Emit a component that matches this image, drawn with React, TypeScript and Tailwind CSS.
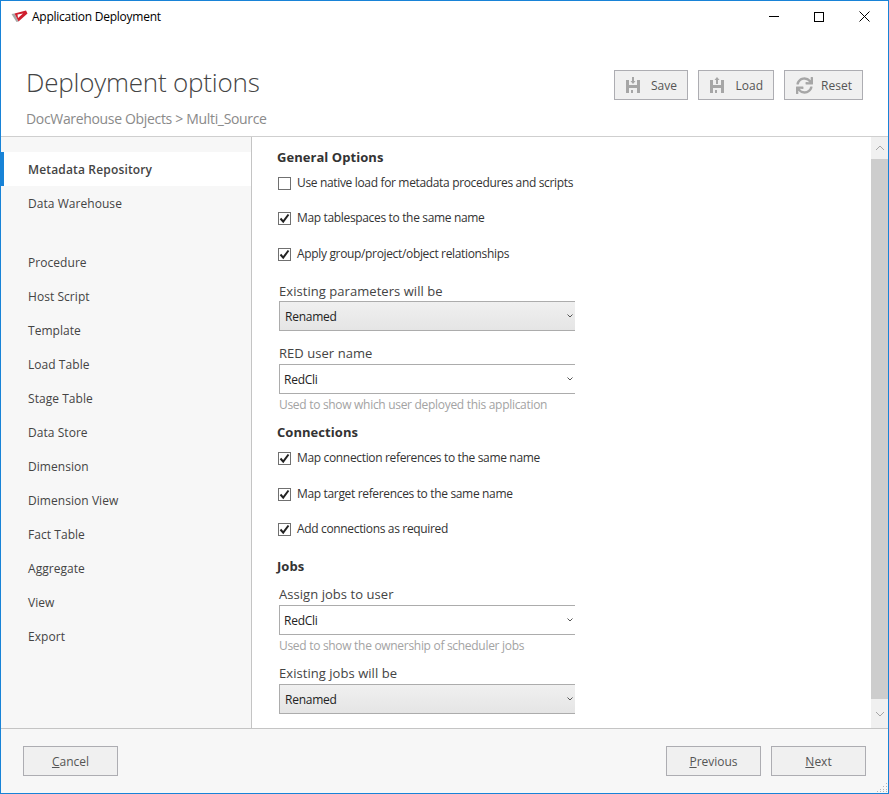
import React from "react";
import { FaSync } from "react-icons/fa";

const objects = [
  "Procedure",
  "Host Script",
  "Template",
  "Load Table",
  "Stage Table",
  "Data Store",
  "Dimension",
  "Dimension View",
  "Fact Table",
  "Aggregate",
  "View",
  "Export",
];

const Logo = () => (
  <svg width="17" height="13" viewBox="0 0 17 13" className="shrink-0">
    <path d="M0.5 4 L3.5 3.5 L7.5 11.5 L5.5 12 Z" fill="#a8a8a8" />
    <path d="M3.5 3.5 L15 0.5 L16.5 3.5 L7.5 11.5 Z M6.5 4.5 L12 3.5 L7 8 Z" fill="#cf1f2e" fillRule="evenodd" />
  </svg>
);

const Disk = ({ up }: { up?: boolean }) => (
  <svg width="14" height="16" viewBox="0 0 14 16" className="shrink-0">
    <path d="M0 3 H3 V8 H11 V3 H14 V16 H0 Z" fill="#a6a6a6" />
    <rect x="3" y="11" width="8" height="5" fill="#f0f0f0" />
    <rect x="5" y="13" width="2" height="3" fill="#a6a6a6" />
    {up ? (
      <path d="M7 0 L9.5 3 H8 V7 H6 V3 H4.5 Z" fill="#a6a6a6" />
    ) : (
      <path d="M6 0 H8 V4 H9.5 L7 7 L4.5 4 H6 Z" fill="#a6a6a6" />
    )}
  </svg>
);

const Chevron = () => (
  <svg width="6" height="4" viewBox="0 0 6 4" className="ml-auto mr-[2px] shrink-0">
    <path d="M0.5 0.5 L3 3 L5.5 0.5" fill="none" stroke="#555555" strokeWidth="1" />
  </svg>
);

const Check = ({ label, checked, className }: { label: string; checked?: boolean; className?: string }) => (
  <div className={`flex items-center gap-[6px] h-[18px] -ml-[1px] ${className ?? ""}`}>
    <span className="w-[13px] h-[13px] border border-[#707070] bg-white flex items-center justify-center shrink-0">
      {checked && (
        <svg width="11" height="11" viewBox="0 0 11 11">
          <path d="M1.5 5.5 L4.2 8.6 L9.5 1.5" fill="none" stroke="#222222" strokeWidth="2" />
        </svg>
      )}
    </span>
    <span className="text-[12px] text-[#333333] tracking-[-0.34px] whitespace-nowrap">{label}</span>
  </div>
);

const Combo = ({ value, editable }: { value: string; editable?: boolean }) => (
  <div
    className={`h-[30px] w-[296px] flex items-center border-y border-l border-[#acacac] text-[12px] text-[#222222] tracking-[-0.25px] ${
      editable ? "bg-white pl-[4px]" : "bg-gradient-to-b from-[#f0f0f0] to-[#e5e5e5] pl-[5px]"
    }`}
  >
    <span className="pt-[2px]">{value}</span>
    <Chevron />
  </div>
);

const FieldLabel = ({ children, className }: { children: React.ReactNode; className?: string }) => (
  <div className={`text-[13px] text-[#444444] tracking-[0.05px] leading-[18px] h-[18px] ${className ?? ""}`}>
    {children}
  </div>
);

const Help = ({ children }: { children: React.ReactNode }) => (
  <div className="text-[12px] text-[#a3a3a3] tracking-[-0.3px] leading-[16px] h-[16px] mt-[3px]">{children}</div>
);

const Heading = ({ children, className }: { children: React.ReactNode; className?: string }) => (
  <div className={`text-[13px] font-bold text-[#333333] tracking-[0.05px] leading-[18px] h-[18px] -ml-[2px] ${className ?? ""}`}>
    {children}
  </div>
);

const ToolButton = ({ icon, label, width }: { icon: React.ReactNode; label: string; width: string }) => (
  <button className={`h-[30px] ${width} flex items-center justify-between pl-[11px] pr-[10px] border border-[#adadb2] bg-[#f0f0f0] text-[12px] text-[#555555]`}>
    {icon}
    <span className="pt-[2px]">{label}</span>
  </button>
);

const FooterButton = ({ mnemonic, rest }: { mnemonic: string; rest: string }) => (
  <button className="h-[30px] w-[95px] pt-[2px] border border-[#adadb2] bg-[#f0f0f0] text-[12px] text-[#555555]">
    <u>{mnemonic}</u>
    {rest}
  </button>
);

const Arrow = ({ down }: { down?: boolean }) => (
  <svg width="10" height="6" viewBox="0 0 10 6">
    <path d={down ? "M1 1 L5 5 L9 1" : "M1 5 L5 1 L9 5"} fill="none" stroke="#a6a6a6" strokeWidth="1" />
  </svg>
);

export default function App() {
  return (
    <div
      className="relative w-[889px] h-[794px] flex flex-col overflow-hidden bg-white border border-[#1883d7]"
      style={{ fontFamily: '"Open Sans", "Noto Sans", sans-serif' }}
    >
      {/* title bar */}
      <div className="h-[31px] shrink-0 flex items-center pl-[10px] text-[12px] text-black tracking-[-0.25px]">
        <Logo />
        <span className="ml-[4px]">Application Deployment</span>
        <div className="ml-auto flex items-center gap-[35px] pr-[18px]">
          <span className="w-[10px] h-[1px] bg-black" />
          <span className="w-[10px] h-[10px] border border-black" />
          <svg width="11" height="11" viewBox="0 0 11 11">
            <path d="M0.5 0.5 L10.5 10.5 M10.5 0.5 L0.5 10.5" stroke="black" strokeWidth="1" />
          </svg>
        </div>
      </div>

      {/* header */}
      <div className="h-[105px] shrink-0 flex justify-between border-b border-[#cfcfcf]">
        <div className="pl-[25px]">
          <div className="mt-[32px] text-[26px] leading-[36px] font-light text-[#444444] tracking-[-0.2px]">
            Deployment options
          </div>
          <div className="mt-[9px] text-[14px] leading-[20px] text-[#8a8a8a] tracking-[-0.33px]">
            DocWarehouse Objects &gt; Multi_Source
          </div>
        </div>
        <div className="flex gap-[10px] pr-[25px] pt-[38px]">
          <ToolButton icon={<Disk />} label="Save" width="w-[74px]" />
          <ToolButton icon={<Disk up />} label="Load" width="w-[76px]" />
          <ToolButton icon={<FaSync className="text-[#a6a6a6] text-[17px]" />} label="Reset" width="w-[79px]" />
        </div>
      </div>

      {/* body */}
      <div className="flex-1 flex min-h-0">
        <aside className="w-[251px] shrink-0 bg-[#f7f7f7] border-r border-[#c4c4c4] pt-[15px] text-[12px] text-[#444444] tracking-[0.05px]">
          <div className="h-[34px] flex items-center pl-[24px] pt-[2px] bg-white border-l-[3px] border-[#1883d7] font-semibold tracking-[0.16px]">
            Metadata Repository
          </div>
          <div className="h-[34px] flex items-center pl-[27px] pt-[2px]">Data Warehouse</div>
          <div className="h-[25px]" />
          {objects.map((name) => (
            <div key={name} className="h-[34px] flex items-center pl-[27px] pt-[2px]">
              {name}
            </div>
          ))}
        </aside>

        <main className="flex-1 min-w-0 pl-[27px] pt-[11px]">
          <Heading>General Options</Heading>
          <Check label="Use native load for metadata procedures and scripts" className="mt-[8px]" />
          <Check label="Map tablespaces to the same name" checked className="mt-[17px]" />
          <Check label="Apply group/project/object relationships" checked className="mt-[18px]" />
          <FieldLabel className="mt-[19px]">Existing parameters will be</FieldLabel>
          <div className="mt-[1px]">
            <Combo value="Renamed" />
          </div>
          <FieldLabel className="mt-[13px]">RED user name</FieldLabel>
          <div className="mt-[2px]">
            <Combo value="RedCli" editable />
          </div>
          <Help>Used to show which user deployed this application</Help>
          <Heading className="mt-[10px]">Connections</Heading>
          <Check label="Map connection references to the same name" checked className="mt-[8px]" />
          <Check label="Map target references to the same name" checked className="mt-[18px]" />
          <Check label="Add connections as required" checked className="mt-[17px]" />
          <Heading className="mt-[19px]">Jobs</Heading>
          <FieldLabel className="mt-[10px]">Assign jobs to user</FieldLabel>
          <div className="mt-[2px]">
            <Combo value="RedCli" editable />
          </div>
          <Help>Used to show the ownership of scheduler jobs</Help>
          <FieldLabel className="mt-[10px]">Existing jobs will be</FieldLabel>
          <div className="mt-[2px]">
            <Combo value="Renamed" />
          </div>
        </main>

        <div className="w-[17px] shrink-0 flex flex-col bg-[#f0f0f0]">
          <div className="h-[22px] flex items-center justify-center">
            <Arrow />
          </div>
          <div className="h-[540px] bg-[#cdcdcd]" />
          <div className="flex-1 flex items-center justify-center">
            <Arrow down />
          </div>
        </div>
      </div>

      {/* footer */}
      <div className="h-[65px] shrink-0 flex justify-between bg-[#f7f7f7] border-t border-[#c4c4c4] pt-[17px] pl-[22px] pr-[22px]">
        <FooterButton mnemonic="C" rest="ancel" />
        <div className="flex gap-[10px]">
          <FooterButton mnemonic="P" rest="revious" />
          <FooterButton mnemonic="N" rest="ext" />
        </div>
      </div>

      {/* resize grip */}
      <svg width="11" height="11" viewBox="0 0 11 11" className="absolute right-0 bottom-0">
        <g fill="#b5b5b5">
          <rect x="9" y="1" width="1" height="1" />
          <rect x="6" y="4" width="1" height="1" />
          <rect x="9" y="4" width="1" height="1" />
          <rect x="3" y="7" width="1" height="1" />
          <rect x="6" y="7" width="1" height="1" />
          <rect x="9" y="7" width="1" height="1" />
          <rect x="0" y="9" width="1" height="1" />
          <rect x="3" y="9" width="1" height="1" />
          <rect x="6" y="9" width="1" height="1" />
          <rect x="9" y="9" width="1" height="1" />
        </g>
      </svg>
    </div>
  );
}
